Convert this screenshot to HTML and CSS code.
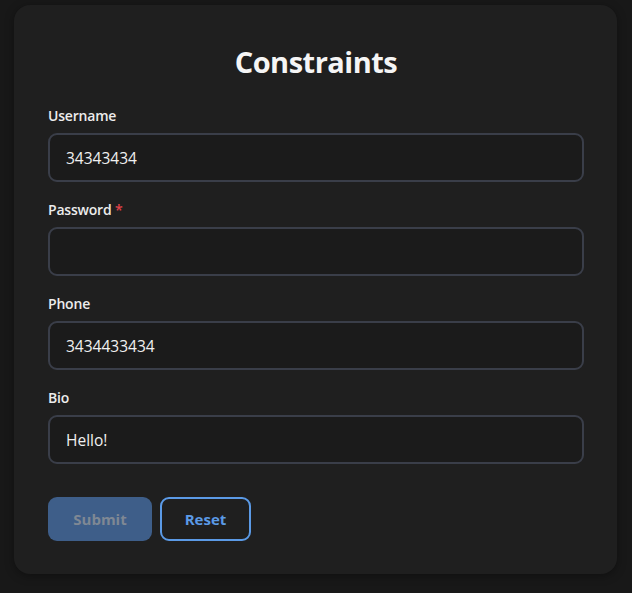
FILE: index.html
```html
<!DOCTYPE html>
<html>
<head>
<meta charset="utf-8">
<link rel="stylesheet" href="styles.css">
</head>
<body>
<div class="page">
  <form class="card">
    <h1 class="title">Constraints</h1>
    <div class="field">
      <label class="label">Username</label>
      <input class="input" type="text" value="34343434">
    </div>
    <div class="field">
      <label class="label">Password <span class="req">*</span></label>
      <input class="input" type="password" value="">
    </div>
    <div class="field">
      <label class="label">Phone</label>
      <input class="input" type="text" value="3434433434">
    </div>
    <div class="field">
      <label class="label">Bio</label>
      <input class="input" type="text" value="Hello!">
    </div>
    <div class="actions">
      <button type="button" class="btn btn-submit" disabled>Submit</button>
      <button type="button" class="btn btn-reset">Reset</button>
    </div>
  </form>
</div>
</body>
</html>
```

FILE: styles.css
```css
html, body {
  margin: 0;
  padding: 0;
  background: #181818;
}
body {
  font-family: "Open Sans", "Noto Sans", sans-serif;
  color: #f2f2f2;
}
.page {
  padding: 5px 15px 19px 14px;
}
.card {
  background: #1f1f1f;
  border-radius: 16px;
  padding: 39px 33px 33px 34px;
  box-shadow: 0 2px 10px rgba(0, 0, 0, 0.35);
  display: flex;
  flex-direction: column;
}
.title {
  margin: 0 0 26px 0;
  text-align: center;
  font-size: 29px;
  line-height: 36px;
  font-weight: 700;
  color: #f5f5f5;
  letter-spacing: -0.5px;
}
.field {
  display: flex;
  flex-direction: column;
  margin-bottom: 18px;
}
.label {
  font-size: 14px;
  line-height: 20px;
  font-weight: 600;
  color: #ececec;
  margin-bottom: 7px;
  letter-spacing: -0.2px;
}
.req {
  color: #e0424a;
}
.input {
  box-sizing: border-box;
  height: 49px;
  width: 100%;
  border: 2px solid #3a3e49;
  border-radius: 9px;
  background: #1b1b1b;
  color: #f0f0f0;
  font-family: "Open Sans", "Noto Sans", sans-serif;
  font-size: 15.5px;
  padding: 0 16px;
  outline: none;
}
.actions {
  display: flex;
  gap: 8px;
  margin-top: 15px;
}
.btn {
  box-sizing: border-box;
  height: 44px;
  border-radius: 9px;
  font-family: "Open Sans", "Noto Sans", sans-serif;
  font-size: 15px;
  font-weight: 700;
}
.btn-submit {
  width: 104px;
  background: #3e5e89;
  border: none;
  color: #7f8894;
}
.btn-reset {
  width: 91px;
  background: transparent;
  border: 2px solid #5b9ae6;
  color: #5b9ae6;
}
```
